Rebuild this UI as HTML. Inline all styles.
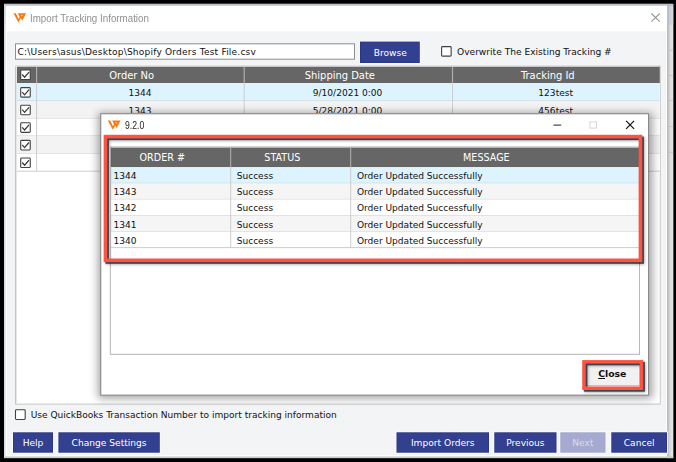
<!DOCTYPE html>
<html><head><meta charset="utf-8"><title>Import Tracking Information</title>
<style>
*{box-sizing:border-box;margin:0;padding:0}
html,body{width:676px;height:462px;overflow:hidden;background:#000}
body{position:relative;font-family:"DejaVu Sans","Liberation Sans",sans-serif;font-size:9.06px;color:#111}
svg.l{position:absolute;left:0;top:0;display:block}
.t{position:absolute;white-space:pre;line-height:12px}
.w{color:#fff}
.h{color:#fff;font-size:9.95px}
.h2{color:#fff;font-size:9.6px}
.c{text-align:center}
.seg{font-family:"Liberation Sans",sans-serif}
#clip{position:absolute;left:0;top:0;width:676px;height:113.2px;overflow:hidden}
</style></head><body>
<svg class="l" width="676" height="462" viewBox="0 0 676 462">
<defs><linearGradient id="gk" x1="0" y1="0" x2="0" y2="1"><stop offset="0" stop-color="#b2bac9"/><stop offset="1" stop-color="#c6ccd8"/></linearGradient><linearGradient id="gs" x1="0" y1="0" x2="1" y2="0"><stop offset="0" stop-color="#cfcfcf"/><stop offset="1" stop-color="#e9e9e9"/></linearGradient><linearGradient id="gs2" x1="0" y1="0" x2="1" y2="0"><stop offset="0" stop-color="#c0c6d0"/><stop offset="1" stop-color="#d8dbe2"/></linearGradient></defs>
<rect x="4" y="3.9" width="669.2" height="454.2" fill="#d2d2d2"/>
<rect x="4" y="3.9" width="669.2" height="20.8" fill="url(#gk)"/>
<rect x="4" y="3.9" width="669.2" height="0.7" fill="#d9dde5"/>
<rect x="4" y="4.6" width="669.2" height="1" fill="#a9aeb6"/>
<rect x="4" y="4.6" width="0.5" height="453.5" fill="#e2e5ea"/>
<rect x="668.4" y="24.7" width="4.8" height="433.4" fill="url(#gs)"/>
<rect x="668.4" y="5.6" width="4.8" height="19.1" fill="url(#gs2)"/>
<rect x="667.1" y="5.6" width="1.3" height="19.1" fill="#b6bac3"/>
<rect x="667.1" y="24.7" width="1.3" height="433.4" fill="#b2b2b2"/>
<rect x="668.4" y="49.75" width="4.8" height="0.9" fill="#c2c2c2"/>
<rect x="668.4" y="75.05" width="4.8" height="0.9" fill="#c2c2c2"/>
<rect x="668.4" y="100.35" width="4.8" height="0.9" fill="#c2c2c2"/>
<rect x="668.4" y="126.05" width="4.8" height="0.9" fill="#c2c2c2"/>
<rect x="668.4" y="151.75" width="4.8" height="0.9" fill="#c2c2c2"/>
<rect x="4.5" y="456.4" width="668.7" height="1.7" fill="#c9c9c9"/>
<rect x="5.5" y="5.6" width="661.6" height="450.8" fill="#ffffff"/>
<rect x="6.9" y="31.4" width="659.3" height="423.9" fill="#f3f4f6"/>
<g transform="translate(13.5,13)"><path d="M0 0.2H2.3L5.1 5.9L6.4 3.4L7.7 4.4L4.9 9.5Z" fill="#fa7a12"/><path d="M4.3 0.2H12.6L8.8 7.7L7.3 5L6.4 4.4ZM7.7 2.1L8.3 3.4L9.1 2.1Z" fill="#fa7a12" fill-rule="evenodd"/></g>
<path d="M651.3 13.5L659.8 21.6M659.8 13.5L651.3 21.6" stroke="#969696" stroke-width="1.05" fill="none"/>
<rect x="15" y="43.3" width="340" height="16.4" fill="#8f8f8f"/>
<rect x="16" y="44.3" width="338" height="14.4" fill="#ffffff"/>
<rect x="359.1" y="40.7" width="61.6" height="23.2" fill="#fafbfc"/><rect x="360" y="41.6" width="59.8" height="21.4" fill="#2a3584"/><rect x="360.8" y="42.4" width="58.2" height="19.8" fill="#333f8f"/>
<rect x="441.6" y="46.6" width="9.55" height="9.55" rx="0.9" fill="#fff" stroke="#414141" stroke-width="1.1"/>
<rect x="15" y="65.7" width="645.7" height="338.9" fill="#c6c6c6"/>
<rect x="15" y="65.7" width="645.7" height="1.1" fill="#dcdcdc"/>
<rect x="16" y="66.8" width="643.8" height="336.8" fill="#ffffff"/>
<rect x="16" y="66.8" width="1" height="336.8" fill="#e6e6e6"/>
<rect x="17" y="66.8" width="642.8" height="16.3" fill="#666666"/>
<rect x="17" y="83.1" width="642.8" height="18" fill="#ddf3fd"/>
<rect x="17" y="100.6" width="642.8" height="1" fill="#cecece"/>
<rect x="17" y="101.1" width="642.8" height="17.4" fill="#f3f3f3"/>
<rect x="17" y="118" width="642.8" height="1" fill="#cecece"/>
<rect x="17" y="118.5" width="642.8" height="17.5" fill="#ffffff"/>
<rect x="17" y="135.5" width="642.8" height="1" fill="#cecece"/>
<rect x="17" y="136" width="642.8" height="17.6" fill="#f3f3f3"/>
<rect x="17" y="153.1" width="642.8" height="1" fill="#cecece"/>
<rect x="17" y="153.6" width="642.8" height="17.6" fill="#ffffff"/>
<rect x="17" y="170.7" width="642.8" height="1" fill="#cecece"/>
<rect x="36.1" y="83.1" width="1" height="88.1" fill="#cecece"/>
<rect x="36" y="66.8" width="1.2" height="16.3" fill="#adadad"/>
<rect x="243.7" y="83.1" width="1" height="88.1" fill="#cecece"/>
<rect x="243.6" y="66.8" width="1.2" height="16.3" fill="#adadad"/>
<rect x="452" y="83.1" width="1" height="88.1" fill="#cecece"/>
<rect x="451.9" y="66.8" width="1.2" height="16.3" fill="#adadad"/>
<rect x="20.7" y="70" width="9.55" height="9.55" rx="0.9" fill="#fff" stroke="#414141" stroke-width="1.1"/><path d="M22.2 74.5L24.6 77.2L29 72.1" fill="none" stroke="#3a3a3a" stroke-width="1.25"/>
<rect x="20.7" y="87.6" width="9.55" height="9.55" rx="0.9" fill="#fff" stroke="#414141" stroke-width="1.1"/><path d="M22.2 92.1L24.6 94.8L29 89.7" fill="none" stroke="#3a3a3a" stroke-width="1.25"/>
<rect x="20.7" y="105.2" width="9.55" height="9.55" rx="0.9" fill="#fff" stroke="#414141" stroke-width="1.1"/><path d="M22.2 109.7L24.6 112.4L29 107.3" fill="none" stroke="#3a3a3a" stroke-width="1.25"/>
<rect x="20.7" y="122.8" width="9.55" height="9.55" rx="0.9" fill="#fff" stroke="#414141" stroke-width="1.1"/><path d="M22.2 127.3L24.6 130L29 124.9" fill="none" stroke="#3a3a3a" stroke-width="1.25"/>
<rect x="20.7" y="140.4" width="9.55" height="9.55" rx="0.9" fill="#fff" stroke="#414141" stroke-width="1.1"/><path d="M22.2 144.9L24.6 147.6L29 142.5" fill="none" stroke="#3a3a3a" stroke-width="1.25"/>
<rect x="20.7" y="158" width="9.55" height="9.55" rx="0.9" fill="#fff" stroke="#414141" stroke-width="1.1"/><path d="M22.2 162.5L24.6 165.2L29 160.1" fill="none" stroke="#3a3a3a" stroke-width="1.25"/>
<rect x="15.5" y="409.8" width="9.7" height="9.7" rx="0.9" fill="#fff" stroke="#414141" stroke-width="1.1"/>
<rect x="12.1" y="431.4" width="41.8" height="22.2" fill="#fafbfc"/><rect x="13" y="432.3" width="40" height="20.4" fill="#2a3584"/><rect x="13.8" y="433.1" width="38.4" height="18.8" fill="#333f8f"/>
<rect x="57.5" y="431.4" width="103.2" height="22.2" fill="#fafbfc"/><rect x="58.4" y="432.3" width="101.4" height="20.4" fill="#2a3584"/><rect x="59.2" y="433.1" width="99.8" height="18.8" fill="#333f8f"/>
<rect x="395.6" y="431.4" width="94.3" height="22.2" fill="#fafbfc"/><rect x="396.5" y="432.3" width="92.5" height="20.4" fill="#2a3584"/><rect x="397.3" y="433.1" width="90.9" height="18.8" fill="#333f8f"/>
<rect x="493.4" y="431.4" width="64" height="22.2" fill="#fafbfc"/><rect x="494.3" y="432.3" width="62.2" height="20.4" fill="#2a3584"/><rect x="495.1" y="433.1" width="60.6" height="18.8" fill="#333f8f"/>
<rect x="610.4" y="431.4" width="57.5" height="22.2" fill="#fafbfc"/><rect x="611.3" y="432.3" width="55.7" height="20.4" fill="#2a3584"/><rect x="612.1" y="433.1" width="54.1" height="18.8" fill="#333f8f"/>
<rect x="559.4" y="431.4" width="47" height="22.2" fill="#fafbfc"/><rect x="560.3" y="432.3" width="45.2" height="20.4" fill="#a2a6cd"/><rect x="561.1" y="433.1" width="43.6" height="18.8" fill="#a6aad0"/>
</svg>
<span class="t seg" style="left:30.2px;top:13px;font-size:10.4px;color:#909090;transform:scaleX(.94);transform-origin:0 0">Import Tracking Information</span>
<span class="t" style="left:17.6px;top:46px;letter-spacing:0.2px">C:\Users\asus\Desktop\Shopify Orders Test File.csv</span>
<span class="t c w" style="left:290.3px;width:200px;top:46.6px;font-size:9.1px">Browse</span>
<span class="t" style="left:457px;top:45.5px;font-size:9.1px">Overwrite The Existing Tracking #</span>
<span class="t c h" style="left:31.65px;width:200px;top:70.1px">Order No</span>
<span class="t c h" style="left:239.85px;width:200px;top:70.1px">Shipping Date</span>
<span class="t c h" style="left:447.8px;width:200px;top:70.1px">Tracking Id</span>
<span class="t c" style="left:40.1px;width:200px;top:87.1px">1344</span>
<span class="t c" style="left:247.6px;width:200px;top:87.1px">9/10/2021 0:00</span>
<span class="t c" style="left:455.7px;width:200px;top:87.1px">123test</span>
<span class="t" style="left:30.7px;top:409px">Use QuickBooks Transaction Number to import tracking information</span>
<span class="t c w" style="left:-67px;width:200px;top:436.6px;font-size:9.1px">Help</span>
<span class="t c w" style="left:9.1px;width:200px;top:436.6px;font-size:9.1px">Change Settings</span>
<span class="t c w" style="left:342.75px;width:200px;top:436.6px;font-size:9.1px">Import Orders</span>
<span class="t c w" style="left:425.4px;width:200px;top:436.6px;font-size:9.1px">Previous</span>
<span class="t c w" style="left:539.15px;width:200px;top:436.6px;font-size:9.1px">Cancel</span>
<span class="t c" style="left:482.9px;width:200px;top:436.6px;font-size:9.1px;color:#d9dbec">Next</span>
<div id="clip"><span class="t c" style="left:40.1px;width:200px;top:105.1px">1343</span><span class="t c" style="left:247.6px;width:200px;top:105.1px">5/28/2021 0:00</span><span class="t c" style="left:455.7px;width:200px;top:105.1px">456test</span></div>
<svg class="l" width="676" height="462" viewBox="0 0 676 462">
<defs><filter id="dsh" x="-5%" y="-10%" width="110%" height="120%"><feGaussianBlur stdDeviation="4.2"/></filter><filter id="rsh" x="-5%" y="-20%" width="110%" height="140%"><feGaussianBlur stdDeviation="0.7"/></filter><filter id="rsh2" x="-5%" y="-20%" width="110%" height="140%"><feGaussianBlur stdDeviation="1.7"/></filter></defs>
<rect x="98" y="113" width="554.5" height="285.5" fill="#000" opacity="0.36" filter="url(#dsh)"/>
<rect x="100.2" y="113.2" width="548.9" height="282.5" fill="#8a8a8a"/>
<rect x="101.3" y="114.3" width="546.7" height="280.3" fill="#ffffff"/>
<g transform="translate(107.9,120.3)"><path d="M0 0.2H2.3L5.1 5.9L6.4 3.4L7.7 4.4L4.9 9.5Z" fill="#fa7a12"/><path d="M4.3 0.2H12.6L8.8 7.7L7.3 5L6.4 4.4ZM7.7 2.1L8.3 3.4L9.1 2.1Z" fill="#fa7a12" fill-rule="evenodd"/></g>
<rect x="553.5" y="124.6" width="7.7" height="1" fill="#222"/>
<rect x="589.9" y="121.9" width="6.6" height="6.2" fill="none" stroke="#d2d2d2" stroke-width="0.9"/>
<path d="M626.1 120.8L634.1 128.8M634.1 120.8L626.1 128.8" stroke="#111" stroke-width="1.2" fill="none"/>
<rect x="109.9" y="145.9" width="530.1" height="208.9" fill="#dedede"/>
<rect x="109.9" y="146.8" width="530.1" height="208" fill="#b8b8b8"/>
<rect x="110.9" y="147.8" width="528.1" height="206" fill="#ffffff"/>
<rect x="110.9" y="147.8" width="528.1" height="19.4" fill="#666666"/>
<rect x="110.9" y="167.2" width="528.1" height="16.1" fill="#ddf3fd"/>
<rect x="110.9" y="182.8" width="528.1" height="1" fill="#cecece"/>
<rect x="110.9" y="183.3" width="528.1" height="16.1" fill="#f5f5f5"/>
<rect x="110.9" y="198.9" width="528.1" height="1" fill="#cecece"/>
<rect x="110.9" y="199.4" width="528.1" height="16.1" fill="#ffffff"/>
<rect x="110.9" y="215" width="528.1" height="1" fill="#cecece"/>
<rect x="110.9" y="215.5" width="528.1" height="16.1" fill="#f5f5f5"/>
<rect x="110.9" y="231.1" width="528.1" height="1" fill="#cecece"/>
<rect x="110.9" y="231.6" width="528.1" height="16" fill="#ffffff"/>
<rect x="110.9" y="247.1" width="528.1" height="1" fill="#cecece"/>
<rect x="230.2" y="167.2" width="1" height="80.4" fill="#cecece"/>
<rect x="230.2" y="147.8" width="1" height="19.4" fill="#b4b4b4"/>
<rect x="350.2" y="167.2" width="1" height="80.4" fill="#cecece"/>
<rect x="350.2" y="147.8" width="1" height="19.4" fill="#b4b4b4"/>
<rect x="585.2" y="363.2" width="55" height="23" fill="#bdbdbd"/>
<rect x="586" y="364" width="53.4" height="21.2" fill="#f1f1f1"/>
<rect x="585.2" y="386.2" width="55" height="1.8" fill="#f6f6f6"/>
<rect x="107.65" y="138.8" width="535" height="123.75" fill="none" stroke="#14242a" stroke-width="3.6" opacity="0.45" filter="url(#rsh2)"/><rect x="107.15" y="138.3" width="535" height="123.75" fill="none" stroke="#14242a" stroke-width="3.6" opacity="0.75" filter="url(#rsh)"/><rect x="105.45" y="136.6" width="535" height="123.75" fill="none" stroke="#fc5342" stroke-width="3.6"/>
<rect x="586.15" y="364.05" width="57.5" height="26.4" fill="none" stroke="#14242a" stroke-width="3.5" opacity="0.45" filter="url(#rsh2)"/><rect x="585.65" y="363.55" width="57.5" height="26.4" fill="none" stroke="#14242a" stroke-width="3.5" opacity="0.75" filter="url(#rsh)"/><rect x="583.95" y="361.85" width="57.5" height="26.4" fill="none" stroke="#fc5342" stroke-width="3.5"/>
</svg>
<span class="t seg" style="left:124.5px;top:119.4px;font-size:11px;color:#222;transform:scaleX(.785);transform-origin:0 0">9.2.0</span>
<span class="t c h2" style="left:62.25px;width:200px;top:151.5px">ORDER #</span>
<span class="t c h2" style="left:182.35px;width:200px;top:151.5px">STATUS</span>
<span class="t c h2" style="left:386.4px;width:200px;top:151.5px">MESSAGE</span>
<span class="t" style="left:113.5px;top:170px">1344</span>
<span class="t" style="left:236.7px;top:170px">Success</span>
<span class="t" style="left:356.9px;top:170px">Order Updated Successfully</span>
<span class="t" style="left:113.5px;top:186px">1343</span>
<span class="t" style="left:236.7px;top:186px">Success</span>
<span class="t" style="left:356.9px;top:186px">Order Updated Successfully</span>
<span class="t" style="left:113.5px;top:202px">1342</span>
<span class="t" style="left:236.7px;top:202px">Success</span>
<span class="t" style="left:356.9px;top:202px">Order Updated Successfully</span>
<span class="t" style="left:113.5px;top:219px">1341</span>
<span class="t" style="left:236.7px;top:219px">Success</span>
<span class="t" style="left:356.9px;top:219px">Order Updated Successfully</span>
<span class="t" style="left:113.5px;top:235px">1340</span>
<span class="t" style="left:236.7px;top:235px">Success</span>
<span class="t" style="left:356.9px;top:235px">Order Updated Successfully</span>
<span class="t" style="left:598.2px;top:368px;font-weight:bold;color:#111;font-size:9.3px"><u>C</u>lose</span>
</body></html>
